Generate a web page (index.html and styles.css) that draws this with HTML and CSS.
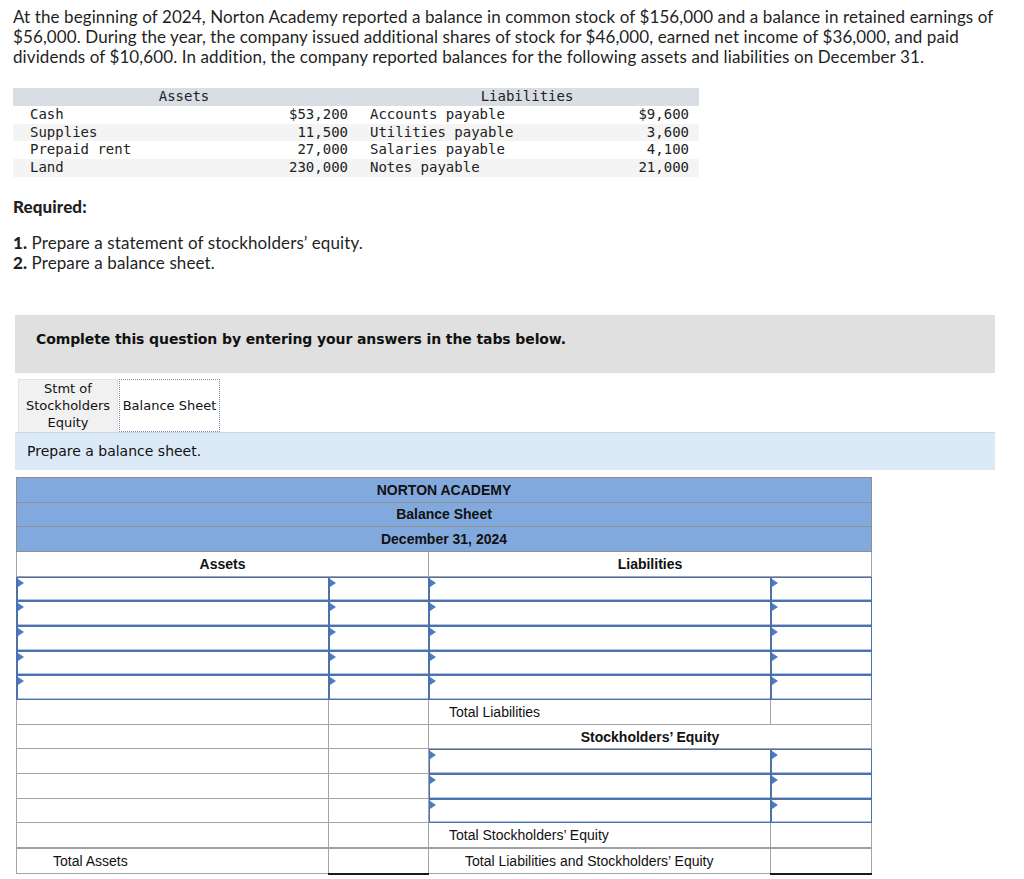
FILE: index.html
```html
<!DOCTYPE html>
<html lang="en">
<head>
  <meta charset="UTF-8">
  <title>Norton Academy - Balance Sheet</title>
  <link rel="stylesheet" href="styles.css">
</head>
<body>
  <p class="intro">
    At the beginning of 2024, Norton Academy reported a balance in common stock of $156,000 and a balance in retained earnings of<br>
    $56,000. During the year, the company issued additional shares of stock for $46,000, earned net income of $36,000, and paid<br>
    dividends of $10,600. In addition, the company reported balances for the following assets and liabilities on December 31.
  </p>

  <table class="data">
    <colgroup>
      <col style="width:257px">
      <col style="width:85px">
      <col style="width:235px">
      <col style="width:109px">
    </colgroup>
    <thead>
      <tr>
        <th colspan="2">Assets</th>
        <th colspan="2">Liabilities</th>
      </tr>
    </thead>
    <tbody>
      <tr>
        <td class="name">Cash</td>
        <td class="amt">$53,200</td>
        <td class="lname">Accounts payable</td>
        <td class="lamt">$9,600</td>
      </tr>
      <tr>
        <td class="name">Supplies</td>
        <td class="amt">11,500</td>
        <td class="lname">Utilities payable</td>
        <td class="lamt">3,600</td>
      </tr>
      <tr>
        <td class="name">Prepaid rent</td>
        <td class="amt">27,000</td>
        <td class="lname">Salaries payable</td>
        <td class="lamt">4,100</td>
      </tr>
      <tr>
        <td class="name">Land</td>
        <td class="amt">230,000</td>
        <td class="lname">Notes payable</td>
        <td class="lamt">21,000</td>
      </tr>
    </tbody>
  </table>

  <div class="required">
    <h3>Required:</h3>
    <ol>
      <li><b>1.</b> Prepare a statement of stockholders’ equity.</li>
      <li><b>2.</b> Prepare a balance sheet.</li>
    </ol>
  </div>

  <div class="notice">Complete this question by entering your answers in the tabs below.</div>

  <div class="tabs">
    <div class="tab">Stmt of<br>Stockholders<br>Equity</div>
    <div class="tab active">Balance Sheet</div>
  </div>
  <div class="prompt">Prepare a balance sheet.</div>

  <table class="sheet">
    <colgroup>
      <col style="width:312px">
      <col style="width:100px">
      <col style="width:342px">
      <col style="width:101px">
    </colgroup>
    <tr class="title"><td colspan="4">NORTON ACADEMY</td></tr>
    <tr class="title"><td colspan="4">Balance Sheet</td></tr>
    <tr class="title"><td colspan="4">December 31, 2024</td></tr>
    <tr class="head">
      <td colspan="2">Assets</td>
      <td colspan="2">Liabilities</td>
    </tr>
    <tr><td class="in"></td><td class="in"></td><td class="in"></td><td class="in"></td></tr>
    <tr><td class="in"></td><td class="in"></td><td class="in"></td><td class="in"></td></tr>
    <tr><td class="in"></td><td class="in"></td><td class="in"></td><td class="in"></td></tr>
    <tr><td class="in"></td><td class="in"></td><td class="in"></td><td class="in"></td></tr>
    <tr><td class="in"></td><td class="in"></td><td class="in"></td><td class="in"></td></tr>
    <tr>
      <td></td><td></td>
      <td class="label">Total Liabilities</td>
      <td></td>
    </tr>
    <tr class="head">
      <td></td><td></td>
      <td colspan="2">Stockholders’ Equity</td>
    </tr>
    <tr><td></td><td></td><td class="in"></td><td class="in"></td></tr>
    <tr><td></td><td></td><td class="in"></td><td class="in"></td></tr>
    <tr><td></td><td></td><td class="in"></td><td class="in"></td></tr>
    <tr class="subtotal">
      <td></td><td></td>
      <td class="label">Total Stockholders’ Equity</td>
      <td></td>
    </tr>
    <tr class="grand">
      <td class="label wide">Total Assets</td>
      <td class="total"></td>
      <td class="label indent">Total Liabilities and Stockholders’ Equity</td>
      <td class="total"></td>
    </tr>
  </table>
</body>
</html>
```

FILE: styles.css
```css
body {
  margin: 0;
  padding: 7px 0 20px 13px;
  background: #fff;
  color: #1f1f1f;
  font-family: Lato, "Liberation Sans", sans-serif;
  font-size: 17px;
  letter-spacing: 0.1px;
}

.intro {
  margin: 0;
  line-height: 20px;
  white-space: nowrap;
}

/* given account balances */
.data {
  margin-top: 21px;
  width: 686px;
  table-layout: fixed;
  border-collapse: collapse;
  font-family: "DejaVu Sans Mono", monospace;
  font-size: 14px;
  line-height: 17.7px;
  letter-spacing: 0;
  color: #222;
}

.data th {
  background-color: #d9dde4;
  font-weight: normal;
  padding: 0;
  height: 18px;
}

.data td {
  padding: 0;
  height: 17.7px;
  white-space: nowrap;
}

.data tbody tr:nth-child(even) td {
  background-color: #f4f4f4;
}

.data .name { padding-left: 17px; }
.data .amt { text-align: right; padding-right: 7px; }
.data .lname { padding-left: 15px; }
.data .lamt { text-align: right; padding-right: 10px; }

.required {
  margin-top: 20px;
}

.required h3 {
  margin: 0;
  font-size: 17px;
  line-height: 20px;
  font-weight: 900;
}

.required ol {
  list-style: none;
  margin: 16px 0 0;
  padding: 0;
  line-height: 20px;
}

.required b {
  font-weight: 900;
}

/* answer area */
.notice {
  margin: 42px 0 0 2px;
  width: 980px;
  height: 58px;
  box-sizing: border-box;
  padding: 14px 0 0 21px;
  background-color: #e0e0e0;
  font-family: "DejaVu Sans", Verdana, sans-serif;
  font-size: 14px;
  line-height: 20px;
  letter-spacing: -0.1px;
  font-weight: bold;
  color: #111;
}

.tabs {
  display: flex;
  align-items: stretch;
  margin: 6px 0 0 5px;
  font-family: "DejaVu Sans", Verdana, sans-serif;
  font-size: 13px;
  line-height: 17px;
  letter-spacing: 0;
  color: #111;
}

.tab {
  width: 100px;
  height: 53px;
  box-sizing: border-box;
  display: flex;
  align-items: center;
  justify-content: center;
  text-align: center;
  background-color: #f1f1f1;
  border: 1px solid #e2e2e2;
  border-bottom: none;
}

.tab.active {
  width: 101px;
  margin-left: 1px;
  background-color: #fff;
  border: 1px dotted #6f8db5;
}

.prompt {
  margin-left: 2px;
  width: 980px;
  height: 38px;
  box-sizing: border-box;
  padding-left: 12px;
  display: flex;
  align-items: center;
  background-color: #dceaf8;
  border-top: 1px solid #c9d6e6;
  font-family: "DejaVu Sans", Verdana, sans-serif;
  font-size: 14px;
  letter-spacing: 0;
  color: #111;
}

.sheet {
  margin: 7px 0 0 3px;
  width: 855px;
  table-layout: fixed;
  border-collapse: collapse;
  font-family: "Liberation Sans", Arial, sans-serif;
  font-size: 14px;
  letter-spacing: 0;
  color: #111;
}

.sheet td {
  height: 23.7px;
  padding: 0;
  border: 1px solid #a3a3a3;
  white-space: nowrap;
}

.sheet .title td {
  background-color: #81a9dd;
  border-color: #8e8e8e;
  text-align: center;
  font-weight: bold;
}

.sheet .head td {
  text-align: center;
  font-weight: bold;
}

.sheet .label { padding-left: 20px; }
.sheet .label.wide { padding-left: 36px; }
.sheet .label.indent { padding-left: 36px; }

.sheet td.in {
  position: relative;
  border: 1px solid #4d71aa;
  box-shadow: inset 1px 1px 0 #4d71aa, inset 0 -1px 0 #aec3df;
}

.sheet td.in::before {
  content: "";
  position: absolute;
  top: 2px;
  left: 1px;
  border-left: 6px solid #4a7cc6;
  border-top: 4px solid transparent;
  border-bottom: 4px solid transparent;
}

.sheet .subtotal td {
  border-bottom: 2px solid #a0a0a0;
}

.sheet .grand td.total {
  border-top: 2px solid #8f8f8f;
  border-bottom: 2px solid #1a1a1a;
}
```
